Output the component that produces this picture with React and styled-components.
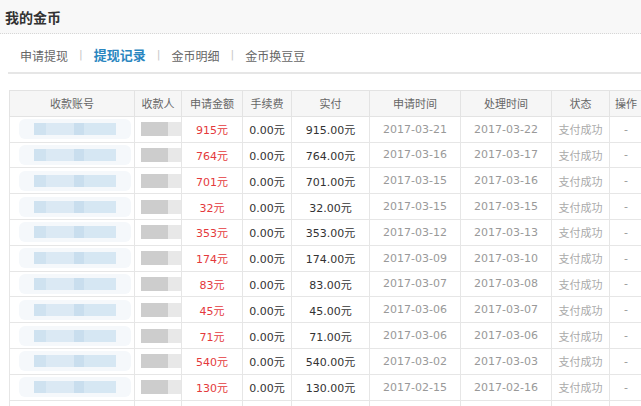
import React from "react";
import styled, { createGlobalStyle } from "styled-components";

const Global = createGlobalStyle`
  html, body { margin: 0; padding: 0; overflow: hidden; background: #fff; }
  body { font-family: "DejaVu Sans", "Noto Sans CJK SC", sans-serif; }
`;

const Page = styled.div`
  width: 641px;
  height: 406px;
  overflow: hidden;
`;

const TitleBar = styled.div`
  height: 33px;
  background: #f8f8f8;
  border-bottom: 1px dotted #d6d6d6;
  display: flex;
  align-items: center;
  padding-left: 5px;
`;

const Title = styled.h1`
  margin: 0;
  font-family: "Noto Sans CJK SC", sans-serif;
  font-size: 14px;
  font-weight: bold;
  color: #333;
`;

const Tabs = styled.div`
  margin: 2px 0 0 8px;
  height: 38px;
  padding-left: 12px;
  border-bottom: 2px solid #e6e6e6;
  display: flex;
  align-items: center;
  box-sizing: border-box;
`;

const Tab = styled.span`
  font-family: "Noto Sans CJK SC", sans-serif;
  font-size: ${(p) => (p.$active ? "13px" : "12px")};
  font-weight: ${(p) => (p.$active ? "bold" : "normal")};
  color: ${(p) => (p.$active ? "#2a86c0" : "#666")};
  transform: translateY(${(p) => (p.$active ? "0" : "1px")});
`;

const Sep = styled.span`
  color: #c8c8c8;
  font-size: 11px;
  margin: 0 11px;
`;

const TableWrap = styled.div`
  padding: 16px 0 0 9px;
`;

const Table = styled.table`
  border-collapse: collapse;
  table-layout: fixed;
  width: 633px;
  border: 1px solid #e6e6e6;
`;

const Th = styled.th`
  height: 24.8px;
  padding: 0;
  background: #f6f6f6;
  border: 1px solid #e3e3e3;
  font-family: "Noto Sans CJK SC", sans-serif;
  font-size: 11px;
  font-weight: normal;
  color: #666;
  text-align: center;
  white-space: nowrap;
  overflow: hidden;
`;

const Td = styled.td`
  height: 24.8px;
  padding: 0;
  border: 1px solid #e6e6e6;
  font-size: 11px;
  text-align: center;
  white-space: nowrap;
  overflow: visible;
  color: ${(p) => p.$color || "#333"};
`;

const AccountBlur = styled.div`
  margin-left: 9px;
  width: 112px;
  height: 20px;
  border-radius: 6px;
  background: #f5f8fb;
  display: flex;
  align-items: center;
  padding-left: 15px;
  box-sizing: border-box;
  filter: blur(0.6px);
`;

const AccountBlocks = styled.div`
  width: 82px;
  height: 12px;
  background: linear-gradient(
    90deg,
    #cfe2f0 0px, #cfe2f0 12px,
    #dbe9f4 12px, #dbe9f4 40px,
    #c9deee 40px, #c9deee 50px,
    #d6e7f3 50px, #d6e7f3 82px
  );
`;

const NameBlur = styled.div`
  margin-left: 6px;
  width: 40px;
  height: 14px;
  display: flex;
  filter: blur(0.4px);
  position: relative;
  z-index: 1;
`;

const NameDark = styled.div`
  width: 27px;
  background: #cdcdcd;
`;

const NameLight = styled.div`
  width: 13px;
  background: #e8e8e8;
`;

const CellInner = styled.div`
  display: flex;
  align-items: center;
`;

const rows = [
  ["915", "03-21", "03-22"],
  ["764", "03-16", "03-17"],
  ["701", "03-15", "03-16"],
  ["32", "03-15", "03-15"],
  ["353", "03-12", "03-13"],
  ["174", "03-09", "03-10"],
  ["83", "03-07", "03-08"],
  ["45", "03-06", "03-07"],
  ["71", "03-06", "03-06"],
  ["540", "03-02", "03-03"],
  ["130", "02-15", "02-16"],
];

const cols = [125, 47, 61, 49, 78, 91, 91, 58, 33];
const heads = ["收款账号", "收款人", "申请金额", "手续费", "实付", "申请时间", "处理时间", "状态", "操作"];

export default function App() {
  return (
    <Page>
      <Global />
      <TitleBar>
        <Title>我的金币</Title>
      </TitleBar>
      <Tabs>
        <Tab>申请提现</Tab>
        <Sep>|</Sep>
        <Tab $active>提现记录</Tab>
        <Sep>|</Sep>
        <Tab>金币明细</Tab>
        <Sep>|</Sep>
        <Tab>金币换豆豆</Tab>
      </Tabs>
      <TableWrap>
        <Table>
          <colgroup>
            {cols.map((w, i) => (
              <col key={i} style={{ width: w }} />
            ))}
          </colgroup>
          <thead>
            <tr>
              {heads.map((h) => (
                <Th key={h}>{h}</Th>
              ))}
            </tr>
          </thead>
          <tbody>
            {rows.map(([amt, d1, d2], i) => (
              <tr key={i}>
                <Td>
                  <CellInner>
                    <AccountBlur>
                      <AccountBlocks />
                    </AccountBlur>
                  </CellInner>
                </Td>
                <Td>
                  <CellInner>
                    <NameBlur>
                      <NameDark />
                      <NameLight />
                    </NameBlur>
                  </CellInner>
                </Td>
                <Td $color="#e4393c">{amt}元</Td>
                <Td>0.00元</Td>
                <Td>{amt}.00元</Td>
                <Td $color="#999">2017-{d1}</Td>
                <Td $color="#999">2017-{d2}</Td>
                <Td $color="#aaa">支付成功</Td>
                <Td $color="#999">-</Td>
              </tr>
            ))}
            <tr>
              {cols.map((_, i) => (
                <Td key={i} />
              ))}
            </tr>
          </tbody>
        </Table>
      </TableWrap>
    </Page>
  );
}
